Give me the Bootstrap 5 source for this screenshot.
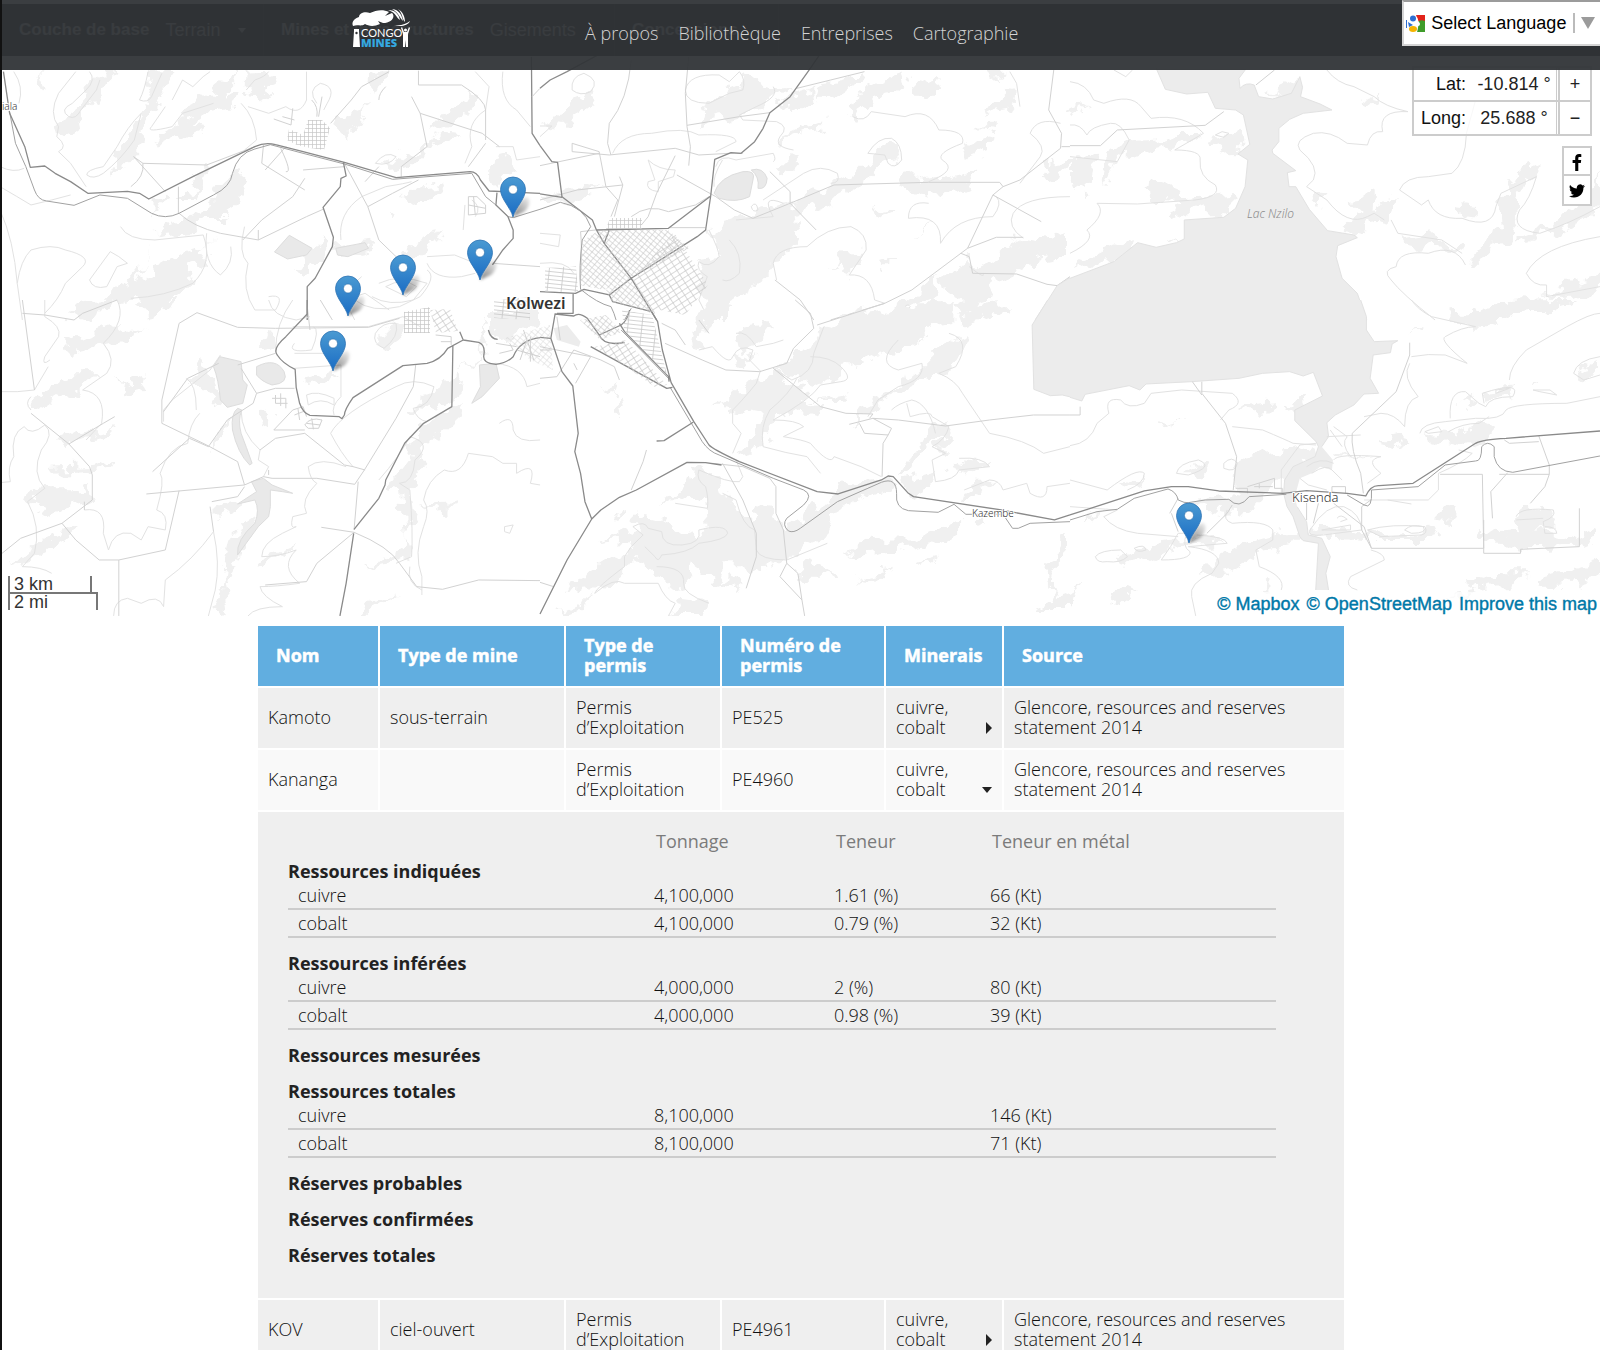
<!DOCTYPE html>
<html lang="fr">
<head>
<meta charset="utf-8">
<meta name="viewport" content="width=device-width, initial-scale=1">
<title>Congo Mines</title>
<link href="https://cdn.jsdelivr.net/npm/bootstrap@5.3.0/dist/css/bootstrap.min.css" rel="stylesheet">
<style>
  body { font-family: "Open Sans", sans-serif; font-weight: 300; font-size: 18px; line-height: 20px; color: #111; background: #fff; }
  .screen { border-left: 2px solid #111; min-height: 100vh; }
  .ui-sans { font-family: "Liberation Sans", Arial, sans-serif; font-weight: 400; font-size: 18px; line-height: 20px; }

  /* header and the layer bar that shows through it */
  .layer-bar { top: 4px; height: 52px; background: #222; color: #ccc; }
  .layer-bar b { font-size: 17px; }
  .layer-bar > div { padding: 0 17px; height: 52px; border-right: 1px solid #333; }
  .layer-bar .layer-basemap { width: 262px; }
  .layer-bar .layer-mines { width: 351px; white-space: nowrap; }
  .layer-bar .layer-conc { width: 164px; }
  .layer-caret { width: 0; height: 0; border: 4px solid transparent; border-top: 5px solid #ccc; border-bottom: 0; }
  .site-head { height: 70px; background: rgba(48,52,55,.95); padding-left: 21.9%; }
  .site-head .brand-link { margin-right: 173px; margin-top: -13px; }
  .site-head nav { margin-top: -4px; }
  .site-head nav a { color: #d4d4d4; text-decoration: none; }
  .lang-btn { width: 198px; height: 46px; background: #fff; border: 2px solid #d5d5d5; border-top-color: #9b9b9b; border-right: 0; color: #000; padding: 0 5px 0 2px; }
  .lang-sep { width: 2px; height: 20px; background: #bbb; }

  /* map */
  .map-area { height: 616px; overflow: hidden; }
  .coords { top: 66px; right: 8px; width: 180px; border: 2px solid #ccc; background: rgba(255,255,255,.75); }
  .coords .coord-line { height: 32px; }
  .coords .coord-line + .coord-line { border-top: 2px solid #ccc; height: 34px; }
  .coords label { width: 52px; text-align: right; }
  .coords input { width: 91px; border: 0; border-right: 1px solid #ccc; background: transparent; text-align: center; color: #222; padding: 0 0 0 6px; }
  .coords button { width: 32px; border: 0; border-left: 2px solid #ccc; background: transparent; color: #222; padding: 0; margin-left: 1px; }
  .share { top: 146px; right: 8px; width: 30px; border: 2px solid #ccc; background: #fff; }
  .share a { height: 26px; color: #000; padding-top: 2px; }
  .share a + a { border-top: 2px solid #ccc; height: 30px; }
  .scale-km, .scale-mi { border: 2px solid #777; padding-left: 4px; background: rgba(255,255,255,.5); color: #333; }
  .scale-box { left: 6px; bottom: 6px; }
  .scale-km { width: 84px; height: 16px; line-height: 16px; border-top: 0; border-bottom: 0; }
  .scale-mi { width: 90px; height: 18px; line-height: 16px; border-bottom: 0; }
  .credit { right: 0; bottom: 0; padding: 2px 3px; background: rgba(255,255,255,.7); }
  .credit a { color: #0078a8; text-decoration: none; -webkit-text-stroke: 0.4px #0078a8; }
  .credit a + a { margin-left: 2px; }

  .pit, .hill { stroke: none; fill: #f0f0f0; }
  .hill { filter: url(#rough); }
  .pit { fill: #e9e9e9; stroke: #ddd; }
  .lake { fill: #ececec; stroke: none; }
  .way-major { fill: none; stroke: #8a8a8a; stroke-width: 1.3; stroke-linejoin: round; }
  .way-rail { fill: none; stroke: #a2a2a2; stroke-width: 1; stroke-linejoin: round; }
  .way-minor { fill: none; stroke: #d2d2d2; stroke-width: 1; stroke-linejoin: round; }
  .contour { fill: none; stroke: #e2e2e2; stroke-width: 1; stroke-linejoin: round; }
  .terrain path { vector-effect: non-scaling-stroke; }
  .place { font-family: "Noto Sans", sans-serif; fill: #333; stroke: #fff; stroke-width: 2px; paint-order: stroke; }
  .place-water { fill: #8c8c8c; stroke: none; }

  /* mines table */
  .mines { width: 100%; max-width: 1090px; margin: 8px auto 0; border-collapse: separate; border-spacing: 2px; table-layout: fixed; }
  .mines > thead th { background: #61aee0; color: #fff; font-weight: 700; -webkit-text-stroke: 0.5px #fff; padding: 9px 18px 11px; height: 60px; vertical-align: middle; }
  .mines > tbody > tr > td { background: #efefef; padding: 9px 10px 11px; height: 60px; vertical-align: middle; }
  .mines > tbody > tr.alt > td { background: #f9f9f9; }
  .mines > tbody > tr.detail > td { padding: 19px 68px 32px 30px; }
  .toggle { border: 0; background: none; padding: 0; color: #111; font-weight: 300; text-align: left; width: 100%; }
  .tri-right { border: 6px solid transparent; border-left-color: #222; border-right: 0; margin-bottom: 3px; }
  .tri-down { border: 5px solid transparent; border-top: 6px solid #222; border-bottom: 0; margin-bottom: 6px; }
  .figures { width: 100%; table-layout: fixed; border-collapse: separate; border-spacing: 0; }
  .figures thead th { font-weight: 400; color: #7b7b7b; padding: 0 0 0 2px; }
  .figures .grp th { font-weight: 700; color: #222; padding: 15px 0 1px; }
  .figures .grp-first th { padding-top: 10px; }
  .figures .line > * { font-weight: 300; padding: 3px 0; border-bottom: 2px solid #ccc; }
  .figures .line th { padding-left: 10px; }
</style>
<script src="https://cdn.jsdelivr.net/npm/bootstrap@5.3.0/dist/js/bootstrap.bundle.min.js"></script>
</head>
<body>
<div class="screen position-relative">

  <section class="map-area position-relative" aria-label="Carte">
    <svg class="d-block w-100 h-100" viewBox="2 0 1598 616" preserveAspectRatio="xMidYMid slice">
      <defs>
        <linearGradient id="pinFill" x1="0" y1="0" x2="0" y2="1"><stop offset="0" stop-color="#4a9ad2"/><stop offset="1" stop-color="#1a6cc4"/></linearGradient>
        <linearGradient id="pinShade" x1="0" y1="1" x2="1" y2="0"><stop offset="0" stop-color="#000" stop-opacity=".5"/><stop offset="1" stop-color="#000" stop-opacity=".05"/></linearGradient>
        <filter id="soft" x="-30%" y="-30%" width="160%" height="160%"><feGaussianBlur stdDeviation="1.800"/></filter>
        <filter id="rough" x="-5%" y="-5%" width="110%" height="110%" color-interpolation-filters="sRGB"><feTurbulence type="fractalNoise" baseFrequency=".022" numOctaves="3" seed="7"/><feDisplacementMap in="SourceGraphic" scale="70" xChannelSelector="R" yChannelSelector="G"/></filter>
        <pattern id="grid1" width="7" height="5" patternUnits="userSpaceOnUse" patternTransform="rotate(-33)"><path d="M0 .5H7M.5 0V5" stroke="#c8c8c8" stroke-width=".7" fill="none"/></pattern>
        <pattern id="grid2" width="5" height="4" patternUnits="userSpaceOnUse" patternTransform="rotate(40)"><path d="M0 .5H5M.5 0V4" stroke="#c8c8c8" stroke-width=".6" fill="none"/></pattern>
        <pattern id="grid3" width="4" height="4" patternUnits="userSpaceOnUse"><path d="M0 .5H4M.5 0V4" stroke="#c6c6c6" stroke-width=".7" fill="none"/></pattern>
        <pattern id="grid4" width="14" height="4" patternUnits="userSpaceOnUse" patternTransform="rotate(6)"><path d="M0 .5H14M.5 0V4" stroke="#c8c8c8" stroke-width=".8" fill="none"/></pattern>
        <g id="pin">
          <path d="M0 0C2-8 7-17 13-20C19-20 17-10 11-5Z" fill="url(#pinShade)" filter="url(#soft)"/>
          <path d="M0 0C-2-9-12.500-18-12.500-27.500A12.500 12.500 0 0 1 12.500-27.500C12.500-18 2-9 0 0Z" fill="url(#pinFill)" stroke="#2e74b4" stroke-width=".8"/>
          <circle cx="0" cy="-27.500" r="4.500" fill="#fff" stroke="#2e6fa8" stroke-width=".6"/>
        </g>
      </defs>

      <!-- terrain: north-west sheet -->
      <g class="terrain" transform="scale(.3444 .3333)">
        <path class="hill" d="M290 215L350 212 300 260 260 330 215 390 175 405 168 375 235 320ZM440 215L500 212 470 300 430 360 405 450 360 500 320 530 350 450 400 370 430 290ZM115 215L130 260 122 275 112 240ZM590 290L640 245 680 215 690 240 640 290 700 280 680 320 600 335 560 360 590 400 545 420 510 405 440 440 470 390 540 370 550 320ZM700 215L780 212 790 240 745 310 710 300 740 260ZM1090 215L1130 212 1110 260 1075 290ZM990 350L1060 325 1050 360 1005 410 985 380ZM1360 270L1395 290 1360 340 1310 375 1240 395 1290 340 1330 320ZM1300 395L1345 400 1250 440 1190 500 1110 510 1160 470 1230 440ZM1200 560L1300 550 1210 615 1170 600ZM700 500L715 520 680 600 660 660 600 660 560 690 440 700 470 680 560 650 610 620 640 560ZM520 600L560 570 550 520 600 500 590 540 560 600ZM440 640L500 600 470 590 440 620ZM440 720L420 790 370 850 300 900 230 905 200 940 260 960 320 920 400 900 430 930 500 900 560 850 540 800 600 790 580 760 650 700 600 740 530 760 460 800 400 850ZM1230 710L1280 700 1260 740 1200 770 1160 780 1190 740ZM910 745L940 700 950 720 930 780 880 820 860 810ZM1130 640L1150 638 1130 660ZM970 740L1090 722 1080 750 990 768ZM1440 470L1480 460 1490 500 1440 560 1420 540Z"/>
        <path class="pit" d="M840 706L906 745 890 765 835 777 797 756Z"/>
        <path class="pit" d="M975 745L1060 728 1070 745 1010 770 980 765Z"/>
        <path class="contour" d="M260 215Q280 240 250 270L210 310Q170 330 200 350Q220 360 235 330L280 270 290 240M405 300Q420 270 430 215M405 300Q430 310 440 290L470 220M410 340Q370 380 340 440L300 500Q250 510 252 525Q270 540 300 520Q350 480 390 420ZM40 215Q70 260 55 310M220 215L170 280Q140 340 170 380L165 410Q200 440 170 455L205 490 250 560M500 300L530 240 560 260 590 230 610 215M480 320L440 380Q420 400 500 380L530 340 620 310M700 310Q740 350 745 420L710 450M715 270L740 240Q770 230 780 215M720 320L780 340 830 320Q870 350 890 300L890 215M920 310Q890 270 930 250Q980 260 950 310L940 330M0 500Q40 520 70 505M0 560Q50 590 90 615L150 600 205 585M0 630Q40 720 50 850L65 960M50 850Q60 780 90 750Q150 730 190 750Q270 770 240 800L190 850Q170 900 130 940M320 755L260 840Q270 870 310 860L340 800 370 790 345 770ZM350 680Q370 720 450 720L590 705Q620 790 560 850 Q480 890 380 895M600 700Q590 790 640 825Q680 790 670 740M710 680Q690 760 720 790Q700 870 740 930L800 930Q830 880 780 890M990 720Q980 640 1050 590L1120 560Q1180 550 1195 545M1350 615L1345 690M1380 650Q1400 620 1370 600M1050 830Q1000 870 1030 900Q1080 940 1160 920L1220 890Q1270 830 1240 810M1100 850Q1160 820 1240 850L1200 900Q1130 920 1080 890M1120 860Q1170 830 1210 860L1180 890ZM1240 770L1320 765 1380 790M1240 790Q1260 840 1340 830L1380 820M1410 330Q1350 370 1370 440L1350 490M1410 330L1420 260 1380 215M1090 490Q1120 450 1150 470Q1130 500 1090 490M1460 215Q1450 300 1500 330L1540 380M1440 440L1490 440 1500 480 1568 470M1030 960L1000 900 1060 880 1130 930"/>
        <path class="way-minor" d="M388 470L415 490 600 495 740 440M388 470L480 575M415 490Q420 530 380 560M518 560V640M520 640Q560 680 640 700L750 720 890 650 938 628M765 435L760 490 885 570M830 440L770 510M815 445Q850 520 830 515M885 535L850 590 760 660 705 720M1000 490L1068 620 1100 720 1160 780M1068 620L1140 580 1215 540M1195 290L1220 340 1240 440 1165 500V530M1220 340L1400 400 1450 440M1215 212V255H1340Q1410 300 1410 330V420M1100 500L1060 545M1130 215L1050 260 1020 300 960 370M795 357L845 375 850 325M820 350L855 360M880 510L1000 500M750 690V720M1410 430L1360 500M1430 790L1568 800"/>
        <path class="way-rail" d="M25 320L45 430 75 500 100 570 Q110 600 135 603L215 616 290 585 370 595 440 640Q480 660 520 640L620 585Q670 560 675 520Q690 460 740 447L785 434 880 460 1000 492 1140 538 1370 520 1410 590 1440 615 1475 650 1490 653 1568 628"/>
        <path class="way-major" d="M10 215L28 340 72 440 88 502 130 498 160 520 205 545 255 580 370 574 405 580 432 597 560 530 740 440Q770 425 800 434L880 455 1000 487 1150 533 1365 515Q1385 515 1395 540L1420 573 1568 580M997 487L1005 528 990 535 988 560 938 622 968 712 965 740 915 835 892 860V960M1543 170L1545 400 1568 437M1443 578L1440 615 1475 650 1490 690V715L1460 750 1430 795"/>
        <path class="way-minor" d="M1545 290L1568 265M905 300Q925 320 920 350M935 290L925 350M1360 590V645L1410 640V615L1385 590ZM1360 615L1410 625M1375 590L1380 645M1120 260Q1100 280 1100 300"/>
      </g>

      <!-- terrain: south-west sheet -->
      <g class="terrain" transform="translate(0 300) scale(.3444 .3333)">
        <path class="hill" d="M190 130L260 100 350 65 360 95 415 95 350 125 280 140 210 155ZM400 20L440 0 520 0 480 40 430 50ZM90 310L140 270 180 255 200 220 290 220 240 270 180 290 120 330 85 330ZM330 230L370 260 430 220 420 265 370 280ZM160 430L190 380 240 400 330 385 320 405 230 420 190 450ZM140 500L270 495 330 480 320 500 270 510 150 515ZM80 590L110 555 150 580 230 580 260 560 270 600 200 620 130 660 110 655 140 620ZM30 800L70 760 140 710 230 670 190 720 130 760 80 780ZM580 180Q610 200 640 310L625 320Q600 260 560 260ZM550 240H585V260ZM620 400L680 340 660 400 620 440ZM620 620L700 595 680 640 620 660ZM670 700L740 650 750 680 700 740 690 790 680 800 650 860 665 948 620 920 640 880 650 790ZM760 780L860 735 850 750 800 780 760 810ZM740 380L760 330 790 340 780 390ZM870 235Q930 230 970 200L980 230 930 250 870 255ZM1090 130L1150 70 1170 80 1130 145ZM1400 50L1410 120 1380 190 1340 220 1330 290 1240 330 1190 325 1230 290 1280 260 1390 190ZM1240 370L1310 320 1350 310 1340 350 1280 410 1230 440 1205 480 1240 490 1190 560 1200 640 1180 700 1195 770 1150 790 1060 800 1140 770 1180 740 1170 570 1120 560 1180 480 1190 410ZM1230 620L1330 610 1320 625 1250 630ZM1040 948L1080 900 1150 880 1090 920 1060 948ZM750 120L790 90 800 140 760 150ZM1420 30H1568V60L1480 110 1420 90Z"/>
        <path class="pit" d="M638 170L700 185 705 240 718 255 705 310 660 322 640 300Q635 240 620 200ZM745 200Q800 170 825 215Q840 250 790 255Q760 245 745 225ZM690 325Q670 340 675 390Q690 460 725 495L732 490Q715 440 700 400 Q690 360 702 330ZM730 545L765 535 790 555 850 580 820 575 785 570 785 620 780 650 750 680 690 765Q685 720 740 670Q755 630 740 600L690 612 745 575ZM1392 195L1440 190 1450 235 1400 290 1370 310 1395 260Z"/>
        <path class="contour" d="M130 0V50Q180 80 170 110L130 170Q120 200 145 180M0 275H50L100 270 140 200M90 330Q70 310 90 290M340 0Q370 60 300 130Q340 180 310 220L240 270Q310 280 295 370L250 420 M0 548L30 545Q20 500 40 470Q30 400 70 380Q90 410 130 375Q160 400 120 450Q90 520 130 565L80 605Q120 680 100 760L65 800Q120 800 150 820M245 630Q310 620 300 700L315 750Q330 690 380 700L410 720 430 680 480 690Q490 640 455 630Q480 540 465 520Q490 440 545 430Q550 370 580 340M540 235Q570 250 570 330M780 0Q790 50 860 60L900 50M850 0Q800 70 800 155M850 80H1070L1170 50 1220 80M855 130Q830 160 905 150Q930 90 910 80M855 160H980Q960 140 940 130M855 205L990 195V290Q960 320 970 345M890 285Q920 270 970 295L970 315Q930 290 895 315ZM1090 100Q1110 65 1150 70Q1160 110 1115 145Q1080 130 1090 100M1005 500Q930 470 895 500Q900 540 920 550Q870 600 890 640L850 650Q840 690 860 680L820 700Q760 730 760 770Q810 770 860 750Q810 800 870 850Q800 860 755 860Q760 890 820 920Q740 920 720 948M960 400Q990 340 1150 260Q1200 230 1260 260Q1250 320 1200 325Q1210 360 1240 365M960 400Q990 460 1025 500M1100 540Q1160 470 1190 410Q1260 430 1205 480Q1200 550 1160 550L1190 570Q1200 700 1195 770L1150 790M1230 600Q1250 630 1230 680Q1200 760 1225 830L1225 885M1230 600Q1240 540 1290 510Q1340 530 1360 460L1430 470 1460 490H1500V520Q1560 480 1540 550L1568 555M1465 680L1490 675 1480 700 1465 695ZM1450 370Q1490 340 1490 390Q1500 430 1568 420M1440 190Q1520 200 1530 260L1568 250M330 948Q330 900 370 895L410 910Q460 880 475 920L480 840Q560 780 620 695Q640 790 625 870L605 948M1190 800Q1180 850 1225 870M640 165L610 210 500 300 475 330V365M700 330Q700 400 755 450L750 480 780 500 765 530"/>
        <path class="way-minor" d="M65 0L100 270M65 40L130 45 215 60 240 40 340 0M470 300L520 70 572 38 690 82 800 85 1070 82 1160 55M470 300V370L600 435 690 485 710 555 425 582M690 195L800 160M700 205L745 280 800 265H855M745 280L735 310 660 360 605 440M605 440L550 415 443 515M475 335L545 235 635 190M200 432L260 500 268 525V600L180 670 60 715 0 765M200 432L300 370 333 350M90 340L200 432M180 670L220 720 288 780H345L480 750 520 572M345 780V948M710 555L765 530 790 535H920L1030 553 1058 510 1150 355 1200 260 1207 195M755 450L800 415 885 400 1000 495 1025 500 1060 510M795 390H885M795 390L850 330M1040 545L1028 690M933 682L1028 697 920 790 890 845 770 855M1028 697Q1130 740 1160 790L1210 860 1285 868 1390 840 1568 842M615 605L690 590 710 560M610 620L620 695M245 630V605M900 90L890 0M930 0L965 60M780 510V525"/>
        <path class="way-minor" d="M790 295H830V325M800 285V310H835M815 280V318M850 330L880 320 890 350M855 345L880 335M865 325L870 360M885 375Q900 350 935 360L925 385 895 385ZM890 370L930 375M905 355L910 388"/>
        <path class="way-major" d="M892 0V42L830 110Q790 145 805 165Q820 190 857 208L860 262 870 310Q880 340 900 346L985 350 993 356 1000 345Q1000 330 1025 293L1170 197 1240 190Q1280 180 1300 145L1345 120 1390 127Q1410 135 1405 165Q1400 190 1440 193Q1470 190 1490 170Q1510 120 1568 113M1335 95L1345 120M1315 137L1312 320 1230 370 1175 430 1120 540 1118 555 1100 595 1028 688M1027 700L1005 850 987 948M1418 90Q1425 118 1445 118"/>
        <path class="way-minor" d="M1265 105L1310 110V135M1280 125H1310M1440 130L1500 140M1450 160L1490 150 1480 130M1510 180L1530 120M1540 110V185M1500 150L1568 170M1520 90L1550 180"/>
      </g>

      <!-- terrain: north-centre sheet -->
      <g class="terrain" transform="translate(540 0) scale(.338 .3333)">
        <path class="hill" d="M5 370L60 340 100 300 160 280 150 320 110 350 80 375ZM480 310L600 260 605 215 650 250 755 265 700 290 660 320 600 345 465 370ZM760 275L810 260 815 300 770 330 700 320ZM830 250L900 240 960 215 960 240 870 290 820 290ZM960 270L1040 230 1080 215 1090 245 1050 280 1000 290 940 330 930 350 900 345 930 310ZM1120 260L1190 235 1160 290 1100 290ZM1330 215H1380L1350 250 1330 245ZM1390 260L1410 270 1400 320 1350 330 1310 355 1340 310ZM1300 380L1360 375V390L1300 385ZM1250 440L1350 400 1320 450 1260 475ZM700 410L760 385 850 370 830 390 760 405 705 425ZM1010 430Q1060 410 1070 460Q1050 500 1020 480L980 520 950 560 870 600 830 625 750 650 700 660 690 620 750 610 860 550 940 510ZM1090 510L1130 540 1220 530 1300 510 1270 550 1180 590 1120 580 1070 560ZM740 470L770 485 730 530 710 500ZM500 690L580 660 700 620 760 650 770 700 740 740 690 800 650 850 580 900 560 960 490 960 500 900 460 860 490 800 470 780 530 770 520 720ZM860 800L920 745 960 750 940 800 910 825 890 790ZM1000 790L1060 770 1010 820ZM980 640L1050 625 1040 640 985 655ZM1130 680L1170 670 1100 700ZM1190 850L1260 770 1300 810 1400 730 1430 715 1480 720 1568 700V760L1460 780 1400 820 1350 830 1330 900 1260 920 1200 890ZM1040 930L1110 870 1180 830 1150 890 1060 950ZM1500 490L1568 480V500L1510 540 1480 530ZM0 590L120 560 190 570 100 600 0 620Z"/>
        <path class="pit" d="M515 580Q530 530 600 515Q640 510 630 540L620 590Q580 610 530 595Z"/>
        <path class="pit" d="M625 510Q660 500 672 535Q670 570 645 565Q650 530 625 510Z"/>
        <path class="contour" d="M95 270Q90 230 130 220Q180 240 150 275Q120 290 95 270M430 270Q440 220 530 225L560 245 590 215Q610 240 600 270L560 280 500 310Q430 310 430 270M690 260Q710 290 640 320L590 345 600 360 700 365Q740 380 710 410Q690 440 750 450M215 460Q240 400 330 400Q430 380 470 405Q580 400 580 425L520 455M925 350Q960 370 980 335L1080 350Q1150 320 1180 390Q1260 390 1250 430Q1170 460 1190 480Q1240 510 1150 545M970 460Q1000 410 1040 415Q1070 430 1070 480Q1050 510 1030 490L1020 465ZM1090 655Q1090 600 1150 610M1090 655Q1190 640 1185 730Q1230 650 1340 650Q1370 610 1350 590M690 790Q700 740 790 740Q850 680 920 680Q970 700 965 750L915 825Q980 820 990 900L1020 910M690 790L700 840M500 690Q530 750 530 770Q500 810 470 785Q460 810 495 830L470 900 490 940M560 720Q600 760 590 820 Q560 850 540 840M520 500Q530 460 580 480L690 460Q700 480 690 485M540 480Q510 530 515 560M320 480Q350 510 400 510L395 530 350 545V575Q310 570 320 545L340 540ZM660 600L780 520Q830 490 880 520Q890 550 860 550M625 620Q640 600 645 630Q630 640 625 620M720 610Q650 580 690 650L580 660M1450 400Q1470 350 1540 370M1450 400Q1500 440 1480 470L1420 550M1400 640Q1380 680 1430 715M1400 640Q1430 590 1568 590M1420 320L1410 250 1390 215M1270 800Q1320 840 1310 820 M1080 920Q1090 930 1095 920Q1090 910 1080 920M0 700L60 705 55 740 0 730M0 790Q80 780 100 820M0 410L35 378H0"/>
        <path class="way-minor" d="M270 180Q260 300 205 370L200 430 210 465M440 170L430 280 435 380 445 440 440 497M435 376L590 350 680 338M95 430V455L205 465 400 445 470 465 560 460 600 460M95 430L175 455 195 560 230 600 210 650M0 497L175 460M0 600L110 570 245 555M235 530L245 555 220 650M400 467L345 580 320 650 300 675M270 650Q320 610 380 635L460 615 500 590M405 525L520 590 575 630 630 655 740 610 870 555 1150 547H1360L1370 560 1340 585 1265 745 1100 870 1020 910 860 960M680 515L740 575V610L817 690M1370 560L1420 540 1540 445 1543 400 1505 330 1520 210M1340 585L1483 665M1265 745L1350 712 1430 712M1245 760L1270 770 1280 820 1410 822 1500 853 1530 857 1568 830M1543 440H1568M760 265L860 240 960 215M695 840L770 900 810 960M385 683H490M165 690L120 695Q125 740 120 840"/>
        <path class="lake" d="M1568 833L1530 857 1500 905 1465 962H1570Z"/>
        <path class="contour" d="M1568 833L1530 857 1500 905 1465 960"/>
        <path class="way-major" d="M0 265L30 240 80 215 180 160M830 160L795 212 740 290 680 338 660 385 635 425 595 460 565 458 517 478 505 588 490 690 465 710 270 835 205 885M0 437L35 485 52 487 65 590 155 660 167 690 380 685 505 588M0 582L65 592M205 690L190 730M167 690L190 730 270 835 330 935 345 960M0 875L105 880 130 868 205 885 215 905 330 935M98 878V940H50"/>
        <path class="way-rail" d="M0 628L60 607Q130 620 150 680L125 720Q115 800 120 868Q170 910 210 920Q220 940 225 960M270 925L250 960"/>
      </g>

      <!-- terrain: south-centre sheet -->
      <g class="terrain" transform="translate(540 300) scale(.338 .3333)">
        <path class="hill" d="M500 0L560 10 520 60 500 90 470 110 480 150 450 140 460 90ZM580 130L600 80 690 70 660 110 600 160ZM560 180L640 160 600 200ZM830 90L900 40 1020 30 1100 10 1220 10 1220 60 1160 70 1110 130 1050 160 1000 170 900 190 880 230 800 260 760 230 690 220 730 190 760 160 800 140ZM1240 50L1300 20 1390 15 1380 35 1290 60 1250 80ZM1200 130L1250 110 1250 170 1180 220 1080 270 1020 300 980 340 920 370 960 310 1050 270 1100 230ZM620 250L690 220 740 240 780 260 760 300 830 320 820 340 760 330 700 350 680 400 660 440 580 460 640 400 650 340 600 330 520 315 590 280ZM780 300L870 290 920 280 900 300ZM1170 380L1210 370 1200 400 1140 440 1100 510 1060 530 1090 480ZM1160 450L1200 400 1220 420 1180 460ZM1220 500L1260 475 1340 490 1280 520ZM1240 570L1300 545 1350 545 1290 575 1260 600ZM1080 540L1180 515 1160 560 1100 590ZM450 500L530 520 550 590 620 670 640 620 700 630 720 690 860 600 880 560 1010 530 1060 550 950 590 870 640 850 700 820 720 740 770 730 790 700 790 660 820 600 790 540 790 520 850 440 790 430 860 400 870 330 810 280 780 240 830 180 860 80 870 90 850 150 820 250 760 270 720 170 730 280 690 280 640 360 660 420 710 500 690 490 600 350 610 390 590 440 560ZM230 640L255 635 250 655ZM760 830L800 790 880 820 850 830ZM930 730L980 710 1060 720 1190 690 1240 650 1240 700 1180 730 1040 750 910 770ZM930 840L1040 815 1010 840 960 845ZM1120 790L1180 775 1150 800ZM380 948L420 890 500 900 480 948ZM50 935L170 880 160 890 100 930 60 945ZM520 830L610 850 580 870 530 855ZM1510 780L1550 700 1568 700V740L1530 780 1510 860 1568 900V930H1460L1520 900 1500 850ZM190 260L230 250 220 280ZM220 350L240 290 250 350ZM1280 660L1310 640 1320 670 1290 680Z"/>
        <path class="lake" d="M40 85L80 75 120 125 115 140 50 120Z"/>
        <path class="lake" d="M1502 0L1456 75 1461 268 1510 287 1545 285 1570 291V0Z"/>
        <path class="contour" d="M1502 0L1456 75 1461 268 1510 287 1545 285 1570 291"/>
        <path class="contour" d="M470 150L510 140Q560 200 570 170Q590 130 630 150L620 180 652 213 640 250Q600 300 570 330L570 370 595 400 570 460M580 100Q610 90 640 140L690 130 720 120M690 205L745 240Q810 220 810 160L840 80M760 235Q740 280 680 330Q650 380 660 440Q730 460 790 470L830 520M800 170Q860 170 890 200Q930 240 890 245L830 255Q800 300 690 360M690 360Q760 360 780 380L720 410Q780 420 800 430Q860 500 870 470L950 500 1010 530M1060 120Q990 190 1060 210L1130 190Q1140 240 1060 260L1000 300 970 350M1210 100Q1280 120 1230 200L1180 220Q1230 240 1250 280L1330 400Q1440 420 1490 460L1568 440M1170 400Q1150 310 1100 300Q1060 310 1040 330M1085 310L1095 350Q1160 330 1160 350L1210 380Q1200 420 1160 440L1200 460 1160 480 1170 545Q1230 540 1240 510L1330 500Q1310 470 1240 475M1255 570L1330 540Q1360 540 1370 570L1440 550 1450 580Q1500 610 1500 560L1568 550M470 510Q460 540 490 560Q500 600 495 625L400 610M470 510Q560 550 590 545L600 530 580 480M540 580L580 600Q600 680 635 690L640 750Q650 780 730 780L850 730M275 680Q310 660 320 685L360 695Q360 740 420 735Q480 730 470 690Q550 670 555 700Q550 720 470 730Q440 760 360 765Q350 790 340 770L310 740M275 680L305 705 270 740 250 770V800Q170 860 162 880Q220 830 250 850L350 850Q370 900 400 910L380 948M345 800Q430 800 425 850 Q420 880 500 910 490 920L460 948M530 850Q580 870 560 910L600 890Q690 890 665 948M680 740Q700 760 690 780M635 800L665 820Q660 850 530 850M900 770L1080 765Q1100 750 1100 780L1080 800M1080 780Q1130 740 1160 790Q1160 870 1190 860Q1210 870 1190 890L1255 948M1010 545L960 600 950 640Q840 690 830 720M1320 720Q1330 780 1370 775L1400 740 1380 690M1320 720L1330 680M1410 760Q1360 820 1400 840L1460 890M1480 770Q1500 700 1540 710Q1550 770 1500 770ZM1120 740L1200 735 1240 720M20 760L50 770M0 265Q30 260 50 240M40 780L50 790M230 200Q240 260 255 295Q260 270 300 255M240 300Q240 350 287 368"/>
        <path class="way-minor" d="M370 130L480 180 550 210 650 215 730 190 750 145 810 85 800 40 755 0M820 75L1020 10M690 205L830 320 905 340 985 342 975 355M915 373L985 355 1060 360 1200 378 1330 360 1460 345H1568M945 370L960 400 1030 405 1040 385 985 355M1030 405L1015 430 1012 530M315 450L305 485 270 570M510 490L600 500 680 535 698 560V640L720 690 730 790 710 830 775 900 783 948M730 790L763 820 775 900M540 490L600 600 640 700V770L610 865M0 847L40 860M50 50L60 120M0 150H35M105 250L150 170 0 140M0 235L50 230 100 150 180 180 220 200 235 240M100 190L110 210M360 70L400 90 430 135M470 60L500 100"/>
        <path class="way-rail" d="M240 90L380 235M385 262L480 425Q500 455 530 465L690 535 780 570Q810 585 780 615L730 655Q715 675 735 693Q750 700 770 685L880 605 1010 547Q1055 530 1055 580Q1050 625 1090 632L1178 637 1225 613 1260 643H1370L1398 685H1415L1450 670 1568 665"/>
        <path class="way-major" d="M45 40L32 115 65 215 97 258 113 400 103 455 120 520 133 605 153 657 180 630 235 592 285 570 435 487 490 488 537 495M153 657L80 780 0 942M45 42L100 48Q115 35 140 55L175 105 240 75M175 105Q190 140 250 127M0 112L32 115M150 140L375 265 392 262M235 70L250 95 380 230 382 245M240 75Q260 60 265 30M330 35L348 65 362 150 388 248 455 365 500 435Q510 447 590 485L820 575 882 582 1010 540 1030 528 1045 530 1090 580 1105 590 1365 630 1522 660 1568 645M453 367L367 422 345 423"/>
      </g>

      <!-- lake and terrain: north-east sheet -->
      <g class="terrain" transform="translate(1070 0) scale(.338 .3333)">
        <path class="hill" d="M0 335L50 310 40 330 0 345ZM120 440L180 430 250 425 320 405 390 405 370 420 250 450 190 475 150 470 100 550 95 530ZM0 480L70 470 50 560 0 540ZM40 575L70 580 50 600ZM400 425L440 415 520 380 525 430 500 455 450 458ZM230 555L280 550 330 570 350 600 400 590 480 585 500 600 460 640 400 640 370 620 310 655 300 630 330 610 235 605ZM100 745L190 720 150 780 90 790 0 810 70 760ZM290 725L330 715 300 735ZM580 290L640 250 680 230 670 280 620 295ZM860 305L930 280 925 310 880 315ZM780 315L835 320ZM1340 510L1390 490 1380 520 1340 545 1310 610 1330 650 1300 720 1230 760 1210 785 1185 785 1210 740 1275 690 1270 600 1300 570ZM1390 690L1480 640 1568 530V620L1520 660 1440 690 1360 725 1310 720ZM830 600L905 590 900 640 930 600 970 590 940 660 900 650 880 700 800 690 830 660 870 640ZM980 710L1060 700 1150 740 1165 760 1060 740 980 730ZM1155 615L1200 620 1195 645 1160 640ZM1490 850L1568 830V860L1480 890 1400 890 1440 870ZM1120 940L1220 935 1300 905 1420 900 1500 900 1400 930 1300 945 1200 960H1120ZM720 570L760 575 720 620 700 600Z"/>
        <path class="lake" d="M255 205L282 268 345 282 408 277 430 325 490 330 513 345 532 433 497 462 526 480 518 560 490 625 455 652 338 660V717L315 728 255 742 200 728 130 785 0 835V962H878L850 880 805 835 787 770 792 737 850 713 840 705 762 692 708 628 668 560 648 560 643 518 668 512 600 460 598 450 618 425V385L650 358 690 340 775 330 740 312 682 290 688 262 680 230 655 280 600 297 558 290 545 255Q520 245 503 265L500 235 522 205Z"/>
        <path class="contour" d="M255 205L282 268 345 282 408 277 430 325 490 330 513 345 532 433 497 462 526 480 518 560 490 625 455 652 338 660V717L315 728 255 742 200 728 130 785 0 835M878 960L850 880 805 835 787 770 792 737 850 713 840 705 762 692 708 628 668 560 648 560 643 518 668 512 600 460 598 450 618 425V385L650 358 690 340 775 330 740 312 682 290 688 262 680 230 655 280 600 297 558 290 545 255Q520 245 503 265L500 235 522 205M0 245Q50 250 70 300L100 310Q180 280 210 320L240 355Q340 340 395 400L310 450Q390 450 385 480Q380 530 430 555Q450 590 370 600L200 612 80 610Q110 640 50 690Q80 720 0 760M0 375Q30 370 50 405Q60 380 120 370Q150 365 175 420L140 485 0 470M430 405L450 395 470 400 455 412ZM760 210Q790 250 840 260L900 290Q930 320 1000 335Q910 330 925 395Q890 390 880 435L820 430Q770 390 720 400Q660 420 680 450Q740 500 720 540L700 560 760 600Q820 680 880 650L900 640 930 660M975 570Q990 530 1060 530L1130 520Q1170 490 1173 400L1200 300M975 570L1040 615 1060 600Q1080 660 1160 655Q1250 690 1260 620L1275 580 1380 530Q1360 600 1330 630Q1300 690 1390 700Q1480 670 1568 620M1170 795Q1140 730 1060 760Q970 750 965 800Q920 810 950 840Q980 880 1080 960M950 660L970 700 1100 720 1160 760M1568 710Q1390 740 1350 820Q1370 860 1410 855L1410 890 1568 860M130 210L165 230 185 210"/>
        <path class="way-minor" d="M0 437H90L140 390 400 376 455 335M550 255L605 210"/>
      </g>

      <!-- lake and terrain: south-east sheet -->
      <g class="terrain" transform="translate(1070 300) scale(.338 .3333)">
        <path class="hill" d="M480 335L540 315 610 310 610 325 520 335ZM630 320L700 300 690 325 640 335ZM270 370L325 350 290 375ZM490 490L560 460 640 450 720 430 730 470 640 520 620 560 570 575 485 570ZM330 520L400 485 410 520ZM160 560L220 520 210 560 170 575ZM30 650L120 625 60 655ZM350 610L470 590 520 570 560 575 560 620 500 640 400 630ZM140 770L190 750 280 720 360 710 460 725 420 740 330 735 280 760 210 790 160 800ZM400 800L470 750 550 720 620 700 690 700 660 730 560 750 540 780 470 820 390 830ZM130 890L160 855 200 865 170 900 140 925ZM0 880L30 860 20 900 0 920ZM560 880L590 850V875ZM700 690Q860 680 870 700L1020 700 1060 680 1080 690 1060 720 870 720 740 710 690 710ZM1080 660L1120 620 1160 610 1130 670ZM1320 660L1340 630 1410 620 1430 650 1410 690 1330 695ZM1280 700L1380 690 1500 720 1568 680V710L1500 740 1350 745 1240 730 1200 690H1230ZM920 440L960 400 1000 430 960 450ZM1040 400Q1120 410 1150 400L1210 370 1270 390 1240 420 1160 450 1080 430ZM1120 50L1200 40 1300 10 1460 0 1440 30 1340 30 1220 75 1150 70ZM1500 210L1568 190V220L1510 240ZM1220 280L1300 265 1310 290 1230 305ZM1140 310L1200 290 1180 320ZM800 460L890 465 800 475ZM1180 860L1280 820 1360 820 1300 850 1210 870ZM1390 830L1568 780V830L1460 860 1380 860ZM1100 880L1200 870 1190 890ZM1010 100L1040 70 1045 90ZM1370 245L1395 230 1380 250Z"/>
        <path class="lake" d="M0 0V292L35 303 45 283 175 257 207 270 225 252 360 245 500 235 570 220 650 215 690 228 720 217 747 288 665 330V362L728 425 735 440 725 470 660 500 635 540 632 580 642 620 660 650 680 710 690 722 735 730 727 870H765L757 820 770 770 745 715 705 705 700 665 672 620 665 590 680 535 715 520 740 500 775 510 778 480 745 440 765 410 760 368 785 345 840 315 870 282 913 280 888 235 897 165 948 158 953 132 970 122 900 125 877 90V50L860 0Z"/>
        <path class="contour" d="M0 292L35 303 45 283 175 257 207 270 225 252 360 245 500 235 570 220 650 215 690 228 720 217 747 288 665 330V362L728 425 735 440 725 470 660 500 635 540 632 580 642 620 660 650 680 710 690 722 735 730 727 870M765 870L757 820 770 770 745 715 705 705 700 665 672 620M745 440L765 410 760 368 785 345 840 315 870 282 913 280 888 235 897 165 948 158 953 132 970 122 900 125 877 90V50L860 0M715 520Q760 490 775 510L805 540M680 535L705 555 760 570M0 437Q60 430 80 370L115 340Q100 290 150 300Q170 330 220 310L240 280 330 270 480 280Q520 310 470 330L445 360M0 540L110 570Q200 500 220 520Q220 550 170 570M315 520Q320 490 380 480Q430 500 350 525ZM455 490Q480 465 495 490Q490 520 455 505ZM0 620L140 630 100 650Q130 690 200 700L320 710M75 770Q90 750 150 750L170 770Q150 790 110 785Q80 790 75 770M190 745Q220 730 225 750Q200 760 190 745M270 780Q300 740 320 700L345 700Q330 740 355 755Q360 780 270 780M375 705Q460 710 465 730L350 740Q440 750 440 790L420 820Q350 850 360 890L372 948M465 630Q450 660 480 670Q580 660 600 690L600 720 550 750 560 800Q640 830 625 870M710 690Q760 610 810 620Q860 640 863 690L750 705Q700 710 710 690M745 690L830 675V690ZM790 655Q800 640 820 658L800 665M880 690Q950 670 1050 680Q1060 700 1040 705L920 710ZM990 690Q1010 670 1045 680Q1060 700 1010 700ZM890 750Q930 760 930 780L830 830Q810 860 850 870M1320 650Q1330 620 1430 630Q1440 650 1400 665L1405 700H1440Q1440 680 1405 680M1320 660L1400 655M1035 400Q1040 370 1110 365L1200 355Q1280 360 1290 330Q1310 310 1470 310L1568 290M1050 395L1090 380 1100 395 1060 400ZM1120 395Q1160 370 1210 370L1240 350M1125 355Q1120 270 1170 275L1210 310 1230 320Q1240 290 1310 290Q1340 240 1220 280L1225 310M1260 270L1300 265 1260 280ZM1370 270H1420L1440 285 1390 275ZM1490 220Q1500 180 1568 170M1490 220L1520 240 1568 225M1005 190Q980 230 1030 290Q990 300 990 380Q960 340 920 340L870 350M1010 170Q1060 160 1110 165L1175 190Q1090 120 1110 110Q1160 80 1200 80L1070 50Q1030 30 1010 0M1300 240Q1300 200 1350 150L1470 80Q1540 40 1568 40M700 500Q740 470 780 490M780 480Q790 460 920 470Q870 480 920 520L880 550M1150 450L1190 460Q1160 490 1090 520V570L1060 600 870 600M940 600L1010 612M480 380L570 390Q640 420 660 430L728 435M625 580V510L680 435 728 430M780 380L820 410Q800 430 830 470M760 410L860 405M770 390L805 440"/>
        <path class="way-minor" d="M1005 128V165L965 275 835 400Q830 450 860 520L868 580M390 245V280L460 370 493 470 483 570M362 245L390 285M1095 523H1220L1224 745H892L863 690V620L890 600M892 745L870 680 780 610M1224 660V760H1333V748L1507 740V625M1295 518L1245 575 1250 655M1270 523H1418L1405 560 1362 610M1387 408L1418 495V523M1285 420L1300 430 1387 425M490 565H525V580M525 560L605 535V565H628V580M545 560H600M560 550V565M775 575V560H815V580M300 640L320 695M320 595L295 640M405 700L465 640 480 615M735 610L720 670M700 600V660M30 320V345H0"/>
        <path class="way-rail" d="M0 660L80 635 140 628 190 595 290 567Q315 575 320 600Q340 610 350 608L400 600 470 598Q500 630 530 590L640 583M820 585L870 615Q895 630 892 570L1030 560 1110 495 1200 483Q1218 485 1218 440Q1235 420 1255 440V470Q1265 515 1310 517L1568 468"/>
        <path class="way-major" d="M0 645L220 573 300 560H350L440 573 630 580 700 572 820 580 875 588Q890 555 915 557L1015 550 1200 430Q1220 418 1290 415L1568 393"/>
      </g>

      <!-- street grids of the towns -->
      <g>
        <path d="M289 129L294 131 303 135 308 120 322 120 330 128 324 150 310 148 297 145 287 140Z" fill="url(#grid3)"/>
        <path d="M404 312L430 307 430 333H404Z" fill="url(#grid3)"/>
        <path d="M430 310L450 309 458 331 436 333Z" fill="url(#grid1)"/>
        <path d="M582 241L600 230 668 230 690 248 632 277 604 290 580 285Z" fill="url(#grid2)"/>
        <path d="M610 218H642V229H606Z" fill="url(#grid3)"/>
        <path d="M632 278L675 234 708 285 685 315 660 310 651 316Z" fill="url(#grid1)"/>
        <path d="M606 290L630 278 652 312 612 302Z" fill="url(#grid2)"/>
        <path d="M545 268L576 266 578 292H545Z" fill="url(#grid4)"/>
        <path d="M580 320L606 315 622 332 600 340Z" fill="url(#grid2)"/>
        <path d="M622 310L652 315 667 375 624 330Z" fill="url(#grid4)"/>
        <path d="M594 347L626 340 667 385 655 387 625 366Z" fill="url(#grid1)"/>
        <path d="M494 300L530 297 530 320 494 318Z" fill="url(#grid4)"/>
        <path d="M505 338L550 325 553 370 530 360Z" fill="url(#grid2)" opacity=".6"/>
      </g>

      <!-- place names -->
      <text class="place" x="506" y="309" font-size="16" font-weight="600">Kolwezi</text>
      <text class="place" x="972" y="517" font-size="10">Kazembe</text>
      <text class="place" x="1292" y="502" font-size="13">Kisenda</text>
      <text class="place place-water" x="1247" y="218" font-size="12" font-style="italic">Lac Nzilo</text>
      <text class="place" x="2" y="110" font-size="10">iala</text>

      <!-- mine pins -->
      <use href="#pin" x="513" y="217"/><use href="#pin" x="480" y="280"/><use href="#pin" x="403" y="295"/>
      <use href="#pin" x="348" y="316"/><use href="#pin" x="333" y="371"/><use href="#pin" x="1189" y="543"/>
    </svg>

    <form class="coords ui-sans position-absolute">
      <div class="coord-line d-flex"><label class="align-self-center" for="lat">Lat:</label><input id="lat" type="text" value="-10.814 °"><button type="button" aria-label="Zoom avant">+</button></div>
      <div class="coord-line d-flex"><label class="align-self-center" for="lng">Long:</label><input id="lng" type="text" value="25.688 °"><button type="button" aria-label="Zoom arrière">−</button></div>
    </form>

    <div class="share position-absolute">
      <a href="#" class="d-flex align-items-center justify-content-center" aria-label="Facebook"><svg width="10" height="17" viewBox="0 0 10 17"><path fill="currentColor" d="M9.300.2V3H7.700C6.500 3 6.300 3.500 6.300 4.300V6H9.200L8.800 9H6.300V17H3.200V9H.6V6H3.200V3.900C3.200 1.300 4.700 0 7 0 8 0 9 .1 9.300.2Z"/></svg></a>
      <a href="#" class="d-flex align-items-center justify-content-center" aria-label="Twitter"><svg width="16" height="14" viewBox="0 0 16 13"><path fill="currentColor" d="M16 1.600A6 6 0 0 1 14.400 3.300C14.600 8.200 11 13 5 13A9 9 0 0 1 0 11.500 6.500 6.500 0 0 0 4.900 10.200 3.300 3.300 0 0 1 1.800 7.900L3.300 7.800A3.300 3.300 0 0 1 .7 4.500L2.200 5A3.300 3.300 0 0 1 1.100.6 9.400 9.400 0 0 0 7.900 4.100 3.300 3.300 0 0 1 13.500 1L15.600.3 14.100 2.100Z"/></svg></a>
    </div>

    <div class="scale-box ui-sans position-absolute"><div class="scale-km">3 km</div><div class="scale-mi">2 mi</div></div>
    <div class="credit ui-sans position-absolute"><a href="#">© Mapbox</a> <a href="#">© OpenStreetMap</a> <a href="#">Improve this map</a></div>

    <div class="layer-bar ui-sans position-absolute start-0 w-100 d-flex">
      <div class="layer-basemap d-flex align-items-center"><b>Couche de base</b><span class="ms-3">Terrain</span><span class="layer-caret ms-auto"></span></div>
      <div class="layer-mines d-flex align-items-center gap-3"><b>Mines et infrastructures</b><span>Gisements</span></div>
      <div class="layer-conc d-flex align-items-center"><b>Concessions</b></div>
    </div>
  </section>

  <header class="site-head position-absolute top-0 start-0 w-100 d-flex align-items-center">
    <a class="brand-link" href="#" aria-label="Congo Mines">
      <svg class="d-block" width="60" height="40" viewBox="0 0 60 40">
        <g fill="#fff">
          <path d="M1 17C-1 13 3 9 7 8 7 4 13 2 18 4 24 1 31 0 37 3L33 7 40 4C44 8 39 14 31 14L26 12 28 15C22 18 16 17 13 15 9 18 6 15 1 17Z"/>
          <path d="M36 1C44 1 47 6 48 11 44 9 45 4 36 1ZM40 0C48 1 50 7 51 12 47 8 47 4 40 0ZM46 0C51 3 53 8 53 13 50 10 51 5 46 0ZM58 12C56 17 48 18 42 16 49 17 54 15 58 12Z"/>
          <path d="M2 20H7V22L8 38H1L2 22Z"/>
          <path d="M49 19L50 18 52 23 55 23 57 18 58 19 56 25 56 38H54L53.500 31 53 38H51L51 25Z"/><circle cx="53.500" cy="21" r="1.500"/>
        </g>
        <circle cx="4.500" cy="24" r="1.200" fill="#303336"/>
        <text x="9" y="28" font-family="Lato, sans-serif" font-size="11" font-weight="400" fill="#fff">CONGO</text>
        <text x="9" y="38" font-family="Open Sans, sans-serif" font-size="11" font-weight="800" fill="#35a8e0">MINES</text>
      </svg>
    </a>
    <nav class="d-flex gap-3" aria-label="Principal">
      <a href="#" class="me-1">À propos</a><a href="#" class="me-1">Bibliothèque</a><a href="#" class="me-1">Entreprises</a><a href="#">Cartographie</a>
    </nav>
    <button type="button" class="lang-btn ui-sans position-absolute top-0 end-0 d-flex align-items-center justify-content-between">
      <svg width="19" height="17" viewBox="0 0 19 17"><path fill="#e2231a" d="M10 0H19V8H13Z"/><path fill="#3f9c2a" d="M12 7Q14 4 19 6V17H11Z"/><path fill="#fff" d="M0 2H11L13 8 11 17H0Z"/><circle cx="7" cy="3.500" r="3" fill="#2d6fd2"/><path fill="#2d6fd2" d="M0 5H1V13H0ZM2 7L7 10 3 12Z"/><ellipse cx="7" cy="14" rx="4" ry="3" fill="#f5b400"/><circle cx="12" cy="9" r="2" fill="#fff"/></svg>
      <span>Select Language</span><span class="lang-sep"></span>
      <svg width="14" height="12" viewBox="0 0 14 12"><path fill="#9b9b9b" d="M0 0H14L7 12Z"/></svg>
    </button>
  </header>

  <main>
    <table class="mines">
      <colgroup><col style="width:120px"><col style="width:184px"><col style="width:154px"><col style="width:162px"><col style="width:116px"><col></colgroup>
      <thead>
        <tr><th>Nom</th><th>Type de mine</th><th>Type de permis</th><th>Numéro de permis</th><th>Minerais</th><th>Source</th></tr>
      </thead>
      <tbody>
        <tr><td>Kamoto</td><td>sous-terrain</td><td>Permis d’Exploitation</td><td>PE525</td>
          <td><button type="button" class="toggle d-flex justify-content-between align-items-end"><span>cuivre,<br>cobalt</span><span class="tri-right"></span></button></td>
          <td>Glencore, resources and reserves<br>statement 2014</td></tr>
        <tr class="alt"><td>Kananga</td><td></td><td>Permis d’Exploitation</td><td>PE4960</td>
          <td><button type="button" class="toggle d-flex justify-content-between align-items-end" aria-expanded="true"><span>cuivre,<br>cobalt</span><span class="tri-down"></span></button></td>
          <td>Glencore, resources and reserves<br>statement 2014</td></tr>
        <tr class="detail"><td colspan="6">
          <table class="figures">
            <colgroup><col style="width:366px"><col style="width:180px"><col style="width:156px"><col></colgroup>
            <thead><tr><td></td><th>Tonnage</th><th>Teneur</th><th>Teneur en métal</th></tr></thead>
            <tbody>
              <tr class="grp grp-first"><th colspan="4">Ressources indiquées</th></tr>
              <tr class="line"><th>cuivre</th><td>4,100,000</td><td>1.61 (%)</td><td>66 (Kt)</td></tr>
              <tr class="line"><th>cobalt</th><td>4,100,000</td><td>0.79 (%)</td><td>32 (Kt)</td></tr>
              <tr class="grp"><th colspan="4">Ressources inférées</th></tr>
              <tr class="line"><th>cuivre</th><td>4,000,000</td><td>2 (%)</td><td>80 (Kt)</td></tr>
              <tr class="line"><th>cobalt</th><td>4,000,000</td><td>0.98 (%)</td><td>39 (Kt)</td></tr>
              <tr class="grp"><th colspan="4">Ressources mesurées</th></tr>
              <tr class="grp"><th colspan="4">Ressources totales</th></tr>
              <tr class="line"><th>cuivre</th><td>8,100,000</td><td></td><td>146 (Kt)</td></tr>
              <tr class="line"><th>cobalt</th><td>8,100,000</td><td></td><td>71 (Kt)</td></tr>
              <tr class="grp"><th colspan="4">Réserves probables</th></tr>
              <tr class="grp"><th colspan="4">Réserves confirmées</th></tr>
              <tr class="grp"><th colspan="4">Réserves totales</th></tr>
            </tbody>
          </table>
        </td></tr>
        <tr><td>KOV</td><td>ciel-ouvert</td><td>Permis d’Exploitation</td><td>PE4961</td>
          <td><button type="button" class="toggle d-flex justify-content-between align-items-end"><span>cuivre,<br>cobalt</span><span class="tri-right"></span></button></td>
          <td>Glencore, resources and reserves<br>statement 2014</td></tr>
      </tbody>
    </table>
  </main>
</div>
</body>
</html>
